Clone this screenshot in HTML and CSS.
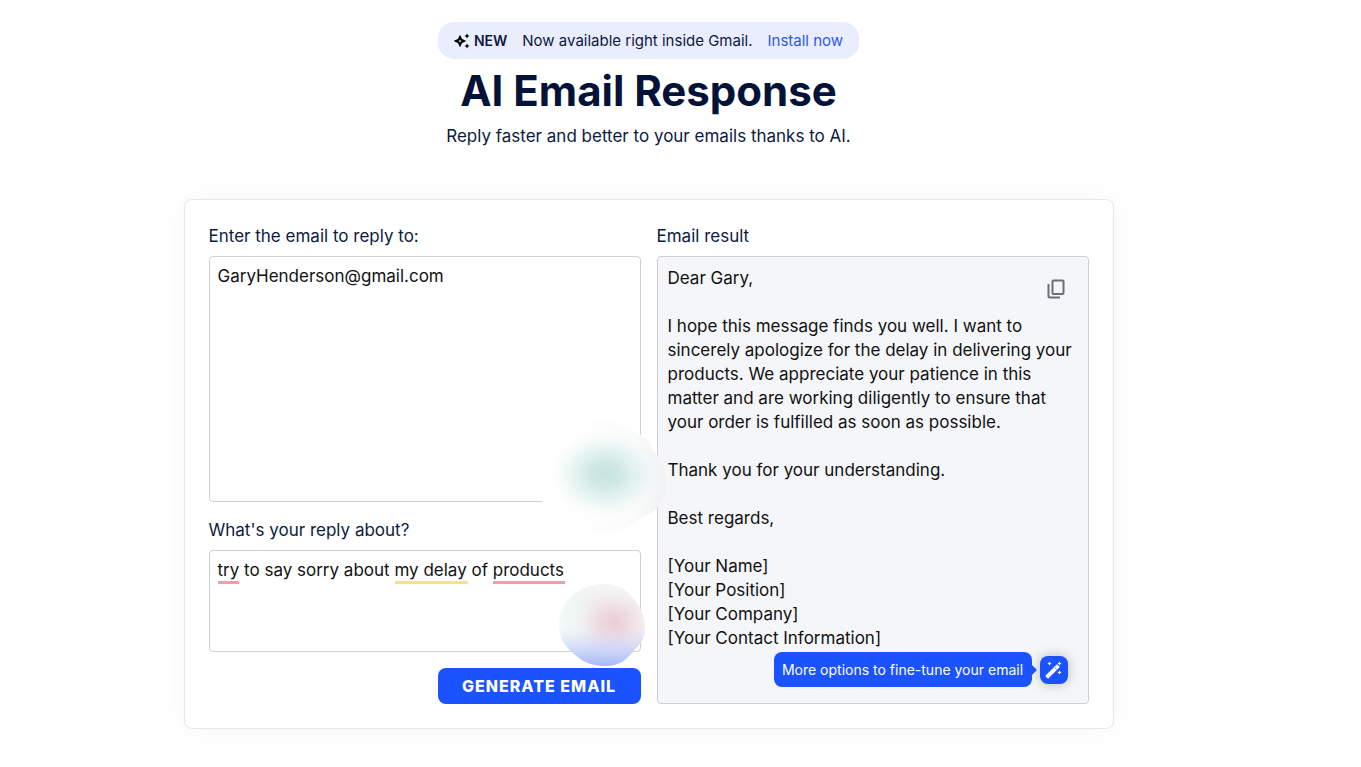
FILE: index.html
```html
<!DOCTYPE html>
<html lang="en">
<head>
  <meta charset="UTF-8" />
  <meta name="viewport" content="width=device-width, initial-scale=1" />
  <title>AI Email Response</title>
  <link rel="stylesheet" href="styles.css">
</head>
<body>
  <header>
    <div class="banner">
      <span class="banner-tag">
        <svg class="sparkles" width="16" height="16" viewBox="0 0 16 16" aria-hidden="true">
          <path class="sparkle-big" d="M6 4l1.300 2.700L10 8 7.300 9.300 6 12 4.700 9.300 2 8l2.700-1.300z" />
          <path d="M13 .5l.9 1.700 1.700.8-1.700.8L13 5.500l-.9-1.700-1.700-.8 1.700-.8zM13 10.500l.9 1.700 1.700.8-1.700.8-.9 1.700-.9-1.700-1.700-.8 1.700-.8z" />
        </svg>
        NEW
      </span>
      <span>Now available right inside Gmail.</span>
      <a href="#">Install now</a>
    </div>
    <h1>AI Email Response</h1>
    <p class="subtitle">Reply faster and better to your emails thanks to AI.</p>
  </header>

  <main class="card">
    <form class="column">
      <label for="email">Enter the email to reply to:</label>
      <div class="field">
        <textarea id="email" class="email-input" spellcheck="false">GaryHenderson@gmail.com</textarea>
        <svg class="blob blob-green" width="140" height="130" viewBox="0 0 140 130" aria-hidden="true">
          <defs>
            <radialGradient id="green-glow">
              <stop offset="0" stop-color="#c5e4e0" />
              <stop offset=".25" stop-color="#cfe8e5" />
              <stop offset=".6" stop-color="#e4f3f0" stop-opacity=".8" />
              <stop offset="1" stop-color="#fafdfc" stop-opacity="0" />
            </radialGradient>
            <linearGradient id="green-fade">
              <stop offset="0" stop-color="#fff" />
              <stop offset=".4" stop-color="#fefefe" />
              <stop offset=".75" stop-color="#fafbfb" />
              <stop offset="1" stop-color="#f0f1f3" />
            </linearGradient>
          </defs>
          <path fill="url(#green-fade)" d="M6 60C3 38 22 22 48 19c10-6 24-10 34-7 8 2 13 7 20 9 11 3 18 11 22 21 9 8 12 18 12 29 0 18-9 32-23 36-12 10-25 17-42 17-19 0-39-9-50-20-8-7-9-13-11-20-2-8-3-15-4-24z" />
          <ellipse fill="url(#green-glow)" cx="76" cy="64" rx="58" ry="46" />
        </svg>
      </div>

      <label for="about">What's your reply about?</label>
      <div class="field">
        <textarea id="about" class="about-input" spellcheck="false">try to say sorry about my delay of products</textarea>
        <span class="mark mark-try"></span>
        <span class="mark mark-delay"></span>
        <span class="mark mark-products"></span>
        <svg class="blob blob-pink" width="86" height="82" viewBox="0 0 86 82" aria-hidden="true">
          <defs>
            <linearGradient id="pink-base" x2="1">
              <stop offset="0" stop-color="#f1fcf9" />
              <stop offset=".4" stop-color="#eeeff0" />
              <stop offset="1" stop-color="#f5f0f4" />
            </linearGradient>
            <radialGradient id="pink-glow" cx=".64" cy=".48" r=".45">
              <stop offset="0" stop-color="#ebcbd5" />
              <stop offset=".4" stop-color="#eed6de" stop-opacity=".8" />
              <stop offset="1" stop-color="#f4eaf0" stop-opacity="0" />
            </radialGradient>
            <linearGradient id="pink-blue" x2="0" y2="1">
              <stop offset="0" stop-color="#f9f9f9" stop-opacity=".7" />
              <stop offset=".25" stop-color="#f5f5f5" stop-opacity="0" />
              <stop offset=".55" stop-color="#c9d2fa" stop-opacity="0" />
              <stop offset="1" stop-color="#a5b8fb" />
            </linearGradient>
            <path id="pink-shape" d="M0 41C0 18 20 0 45 0c13 0 22 5 29 14 8 9 12 20 12 31 0 9-4 15-10 20-8 11-16 17-30 17-14 0-24-5-33-14C5 62 0 52 0 41z" />
          </defs>
          <use href="#pink-shape" fill="url(#pink-base)" />
          <use href="#pink-shape" fill="url(#pink-glow)" />
          <use href="#pink-shape" fill="url(#pink-blue)" />
        </svg>
      </div>
      <button type="button" class="generate">GENERATE EMAIL</button>
    </form>

    <section class="column">
      <label for="result">Email result</label>
      <div class="result-box">
        <output id="result">Dear Gary,

I hope this message finds you well. I want to
sincerely apologize for the delay in delivering your
products. We appreciate your patience in this
matter and are working diligently to ensure that
your order is fulfilled as soon as possible.

Thank you for your understanding.

Best regards,

[Your Name]
[Your Position]
[Your Company]
[Your Contact Information]</output>
        <button type="button" class="copy" aria-label="Copy">
          <svg width="18" height="20" viewBox="0 0 18 20" aria-hidden="true">
            <rect x="5.500" y="1.500" width="11" height="13.500" rx="1" />
            <path d="M1.500 5v12.500q0 1 1 1H13" />
          </svg>
        </button>
        <div class="options">
          <span class="tooltip">More options to fine-tune your email</span>
          <button type="button" class="wand" aria-label="More options">
            <svg width="18" height="18" viewBox="0 0 18 18" aria-hidden="true">
              <path class="wand-stick" d="M3 15L12 6" />
              <path class="wand-gap" d="M10.200 6.800l1.400 1.400" />
              <path class="wand-stars" d="M4.500.5l.7 1.300 1.300.7-1.300.7-.7 1.300-.7-1.300-1.300-.7 1.300-.7zM14.500.5l.7 1.300 1.300.7-1.300.7-.7 1.300-.7-1.300-1.300-.7 1.300-.7zM14.500 9.500l.7 1.300 1.300.7-1.300.7-.7 1.300-.7-1.300-1.300-.7 1.300-.7z" />
            </svg>
          </button>
        </div>
      </div>
    </section>
  </main>
</body>
</html>
```
FILE: styles.css
```css
* {
  box-sizing: border-box;
}

body {
  margin: 0;
  padding: 22px 64px 38px 0;
  display: flex;
  flex-direction: column;
  align-items: center;
  background: #fff;
  color: #0d1a40;
  font-family: Inter, "Open Sans", sans-serif;
  font-size: 17px;
  line-height: 24px;
}

header {
  display: flex;
  flex-direction: column;
  align-items: center;
  text-align: center;
}

button {
  border: 0;
  padding: 0;
  font-family: inherit;
  cursor: pointer;
}

svg {
  display: block;
}

.banner {
  display: flex;
  align-items: center;
  gap: 15px;
  height: 37px;
  padding: 0 16px;
  border-radius: 16px;
  background: #e9edfd;
  font-size: 15px;
}

.banner-tag {
  display: flex;
  align-items: center;
  gap: 4px;
  font-size: 14px;
  font-weight: 600;
}

.sparkles {
  fill: #000;
}

.sparkle-big {
  fill: none;
  stroke: #000;
  stroke-width: 2px;
}

.banner a {
  color: #2b5ce6;
  text-decoration: none;
}

h1 {
  margin: 8px 0 9px;
  color: #031238;
  font-size: 42px;
  font-weight: 700;
  line-height: 48px;
}

.subtitle {
  margin: 0 0 51px;
}

.card {
  display: grid;
  grid-template-columns: 1fr 1fr;
  gap: 16px;
  width: 100%;
  max-width: 930px;
  padding: 24px;
  border: 1px solid #e6e7ea;
  border-radius: 8px;
  background: #fff;
  box-shadow: 0 0 24px rgba(0, 0, 0, 0.04);
}

.column {
  display: flex;
  flex-direction: column;
}

label {
  margin-bottom: 8px;
}

.field {
  position: relative;
  margin-bottom: 16px;
}

textarea {
  display: block;
  width: 100%;
  padding: 7px 8px;
  border: 1px solid #ced0d6;
  border-radius: 4px;
  background: #fff;
  color: #111;
  font: inherit;
  resize: none;
  outline: none;
}

.email-input {
  height: 246px;
}

.about-input {
  height: 102px;
}

.mark {
  position: absolute;
  top: 31px;
  height: 3px;
  background: #f29dab;
}

.mark-try {
  left: 9px;
  width: 21px;
}

.mark-delay {
  left: 186px;
  width: 73px;
  background: #f9df8b;
}

.mark-products {
  left: 284px;
  width: 72px;
}

.blob {
  position: absolute;
  pointer-events: none;
}

.blob-green {
  right: -29px;
  bottom: -38px;
  z-index: 1;
}

.blob-pink {
  right: -4px;
  bottom: -14px;
}

.generate {
  align-self: flex-end;
  width: 203px;
  height: 36px;
  border-radius: 8px;
  background: #1a53ff;
  color: #fff;
  font-size: 16px;
  font-weight: 800;
  letter-spacing: 1px;
}

.result-box {
  position: relative;
  flex: 1;
  padding: 9px 10px;
  border: 1px solid #ced0d6;
  border-radius: 4px;
  background: #f5f6f9;
  color: #111;
}

#result {
  display: block;
  white-space: pre-line;
}

.copy {
  position: absolute;
  top: 22px;
  right: 23px;
  background: none;
}

.copy svg {
  fill: none;
  stroke: #6b6e79;
  stroke-width: 2px;
}

.options {
  position: absolute;
  right: 20px;
  bottom: 16px;
  display: flex;
  align-items: center;
  gap: 8px;
}

.tooltip {
  position: relative;
  width: 258px;
  border-radius: 8px;
  background: #1a53ff;
  color: #fff;
  font-size: 14px;
  line-height: 35px;
  text-align: center;
}

.tooltip::after {
  content: "";
  position: absolute;
  top: 13px;
  left: 100%;
  border: 5px solid transparent;
  border-left-color: #1a53ff;
  border-right: 0;
}

.wand {
  display: grid;
  place-items: center;
  width: 28px;
  height: 28px;
  border-radius: 8px;
  background: #1a53ff;
  box-shadow: 0 0 12px rgba(0, 0, 0, 0.25);
}

.wand-stick {
  stroke: #fff;
  stroke-width: 4px;
  stroke-linecap: square;
}

.wand-gap {
  stroke: #1a53ff;
  stroke-width: 1px;
}

.wand-stars {
  fill: #fff;
}
```
